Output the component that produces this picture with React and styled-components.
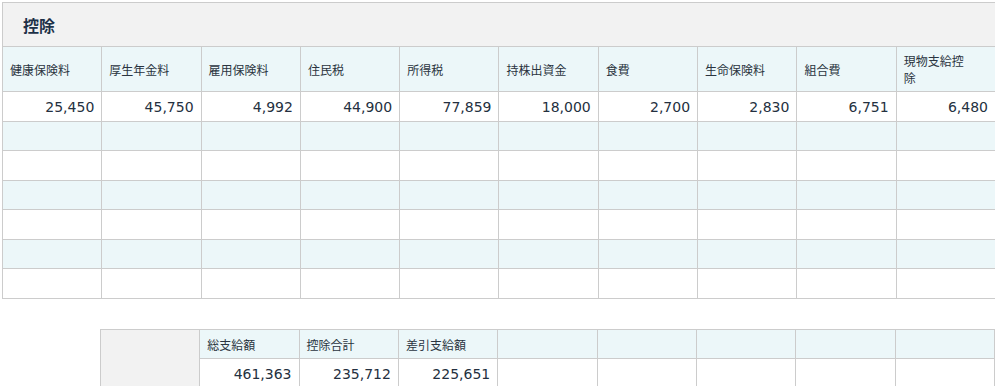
import React from "react";
import styled, { createGlobalStyle } from "styled-components";

const Global = createGlobalStyle`
  html, body { margin: 0; padding: 0; background: #fff; overflow: hidden; }
  body { font-family: "DejaVu Sans", "Noto Sans CJK JP", sans-serif; color: #2a3440; }
`;

const Page = styled.div`
  padding: 2px 0 0 2px;
  width: 1000px;
`;

const Panel = styled.section`
  width: 994px;
  border-top: 1px solid #cccccc;
  border-left: 1px solid #cccccc;
`;

const TitleBar = styled.h2`
  margin: 0;
  height: 43px;
  display: flex;
  align-items: center;
  padding-left: 20px;
  background: #f2f2f2;
  font-family: "Noto Sans CJK JP", sans-serif;
  font-size: 16px;
  font-weight: 700;
  color: #1d3148;
`;

const Table = styled.table`
  width: 994px;
  table-layout: fixed;
  border-collapse: collapse;
  margin-left: ${(p) => (p.$offset ? "-1px" : "0")};
`;

const Row = styled.tr`
  height: ${(p) => p.$h}px;
  background: ${(p) => (p.$alt ? "#ecf7f9" : "#ffffff")};
`;

const Head = styled.th`
  border: 1px solid #cccccc;
  background: #ecf7f9;
  text-align: left;
  vertical-align: middle;
  font-family: "Noto Sans CJK JP", sans-serif;
  font-size: 12px;
  font-weight: 400;
  line-height: 17px;
  padding: 0 8px 0 7px;
  color: #2a3440;
`;

const Cell = styled.td`
  border: 1px solid #cccccc;
  text-align: right;
  vertical-align: middle;
  font-size: 14px;
  padding: 0 7px 0 8px;
  color: #243040;
`;

const Blank = styled.td`
  border: none;
  background: #fff;
`;

const GrayCell = styled.td`
  border: 1px solid #cccccc;
  background: #f2f2f2;
`;

const Spacer = styled.div`
  height: 30px;
`;

const heads = [
  "健康保険料",
  "厚生年金料",
  "雇用保険料",
  "住民税",
  "所得税",
  "持株出資金",
  "食費",
  "生命保険料",
  "組合費",
  ["現物支給控", "除"],
];
const values = ["25,450", "45,750", "4,992", "44,900", "77,859", "18,000", "2,700", "2,830", "6,751", "6,480"];

const summaryHeads = ["総支給額", "控除合計", "差引支給額"];
const summaryValues = ["461,363", "235,712", "225,651"];

export default function App() {
  return (
    <>
      <Global />
      <Page>
        <Panel>
          <TitleBar>控除</TitleBar>
          <Table $offset>
            <tbody>
              <Row $h={45}>
                {heads.map((h, i) => (
                  <Head key={i}>
                    {Array.isArray(h) ? (
                      <>
                        {h[0]}
                        <br />
                        {h[1]}
                      </>
                    ) : (
                      h
                    )}
                  </Head>
                ))}
              </Row>
              <Row $h={30}>
                {values.map((v, i) => (
                  <Cell key={i}>{v}</Cell>
                ))}
              </Row>
              {[1, 0, 1, 0, 1, 0].map((alt, r) => (
                <Row key={r} $h={r % 2 ? 30 : 29} $alt={!!alt}>
                  {heads.map((_, i) => (
                    <Cell key={i} />
                  ))}
                </Row>
              ))}
            </tbody>
          </Table>
        </Panel>
        <Spacer />
        <Table $offset>
          <tbody>
            <Row $h={29}>
              <Blank rowSpan={2} />
              <GrayCell rowSpan={2} />
              {summaryHeads.map((h) => (
                <Head key={h}>{h}</Head>
              ))}
              {[0, 1, 2, 3, 4].map((i) => (
                <Head key={"e" + i} />
              ))}
            </Row>
            <Row $h={30}>
              {summaryValues.map((v) => (
                <Cell key={v}>{v}</Cell>
              ))}
              {[0, 1, 2, 3, 4].map((i) => (
                <Cell key={"d" + i} />
              ))}
            </Row>
          </tbody>
        </Table>
      </Page>
    </>
  );
}
